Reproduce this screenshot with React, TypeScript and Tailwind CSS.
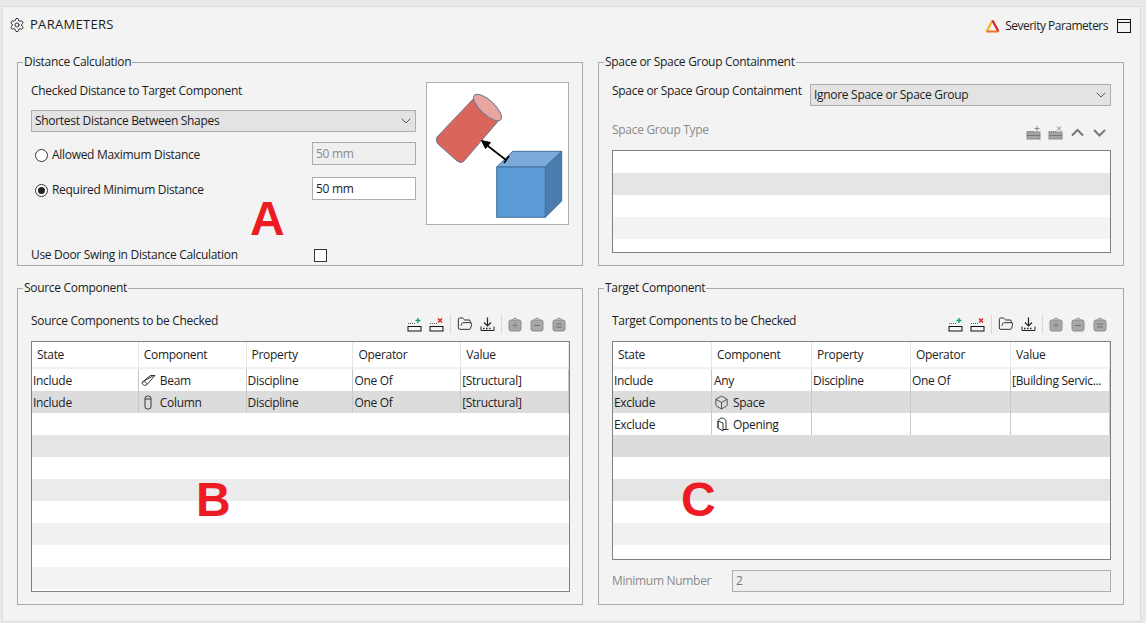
import { ReactNode } from 'react';
import { Settings, ChevronDown, FolderOpen, Box } from 'lucide-react';

type Row = { state: string; component?: string; icon?: ReactNode; property?: string; operator?: string; value?: string };

const RowAdd = ({ mark, color, muted }: { mark: 'plus' | 'x'; color: string; muted?: boolean }) => (
  <svg width="15" height="15" viewBox="0 0 15 15" fill="none">
    <path d="M1 6.5H9" stroke={muted ? '#777' : '#555'} strokeDasharray="1 1" />
    <rect x="1" y={muted ? 7 : 9.5} width="13" height={muted ? 7 : 4.5} fill={muted ? '#a6a6a6' : 'none'} stroke={muted ? '#8a8a8a' : '#111'} />
    {muted && <path d="M1 10.5H14" stroke="#777" />}
    {mark === 'plus' ? <path d="M11 1V6M8.5 3.5H13.5" stroke={color} strokeWidth={muted ? 1 : 1.4} /> : <path d="M9 1.5L13 5.5M13 1.5L9 5.5" stroke={color} strokeWidth={muted ? 1 : 1.4} />}
  </svg>
);

const ImportIcon = () => (
  <svg width="15" height="15" viewBox="0 0 15 15" fill="none" stroke="#222">
    <path d="M7.5 0.5V8.5M4 5.5L7.5 9L11 5.5" strokeWidth="1.2" />
    <path d="M1 9.5V13.5H14V9.5" />
    <path d="M3 11.5H12" strokeDasharray="1.5 1.5" strokeWidth="1.4" />
  </svg>
);

const BagIcon = ({ kind }: { kind: 'plus' | 'minus' | 'equal' }) => (
  <svg width="14" height="15" viewBox="0 0 14 15" fill="none">
    <path d="M4.5 3.5C4.5 0.5 9.5 0.5 9.5 3.5" stroke="#888" />
    <rect x="1" y="3" width="12" height="11" rx="2" fill="#a8a8a8" stroke="#8c8c8c" />
    {kind === 'plus' && <path d="M7 5.5V11.5M4 8.5H10" stroke="#808080" />}
    {kind === 'minus' && <path d="M4 8.5H10" stroke="#707070" />}
    {kind === 'equal' && <path d="M4 7H10M4 10H10" stroke="#707070" />}
  </svg>
);

const Chevron = ({ up }: { up?: boolean }) => (
  <svg width="15" height="15" viewBox="0 0 15 15" fill="none">
    <path d={up ? 'M2 10.5L7.5 5L13 10.5' : 'M2 5L7.5 10.5L13 5'} stroke="#777" strokeWidth="2" />
  </svg>
);

const BeamIcon = () => (
  <svg width="15" height="13" viewBox="0 0 15 13" fill="none" stroke="#333">
    <path d="M1 8.5L9.5 1.5H14L6 10.5C4 12 1.5 11.5 1 8.5Z" />
    <path d="M1 8.5C2.5 6.8 5.5 7.5 6 10.5M3.5 6.5L12 2" />
  </svg>
);

const ColumnIcon = () => (
  <svg width="10" height="15" viewBox="0 0 10 15" fill="none" stroke="#333">
    <rect x="2" y="1" width="6" height="13" rx="2.5" />
    <path d="M2 4H8" />
  </svg>
);

const OpeningIcon = () => (
  <svg width="14" height="15" viewBox="0 0 14 15" fill="none" stroke="#333">
    <path d="M3 11V5C3 -0.2 11 -0.2 11 5V13" />
    <path d="M3 4L8 6V14L3 11Z" />
    <path d="M8 12.5H13.5" />
  </svg>
);

const sourceRows: Row[] = [
  { state: 'Include', component: 'Beam', icon: <BeamIcon />, property: 'Discipline', operator: 'One Of', value: '[Structural]' },
  { state: 'Include', component: 'Column', icon: <ColumnIcon />, property: 'Discipline', operator: 'One Of', value: '[Structural]' },
];

const targetRows: Row[] = [
  { state: 'Include', component: 'Any', property: 'Discipline', operator: 'One Of', value: '[Building Servic...' },
  { state: 'Exclude', component: 'Space', icon: <Box size={17} strokeWidth={1.3} color="#333" /> },
  { state: 'Exclude', component: 'Opening', icon: <OpeningIcon /> },
];

const Toolbar = () => (
  <div className="flex items-center">
    <RowAdd mark="plus" color="#10a36a" />
    <div className="ml-[7px]"><RowAdd mark="x" color="#e02020" /></div>
    <div className="mx-[6px] h-[20px] w-px bg-[#d8d8d8]" />
    <FolderOpen size={16} strokeWidth={1.4} color="#222" />
    <div className="ml-[7px]"><ImportIcon /></div>
    <div className="mx-[6px] h-[20px] w-px bg-[#d8d8d8]" />
    <BagIcon kind="plus" />
    <div className="ml-[8px]"><BagIcon kind="minus" /></div>
    <div className="ml-[8px]"><BagIcon kind="equal" /></div>
  </div>
);

function DataTable({ widths, rows, stripes, tall, letter, letterClass }: { widths: string[]; rows: Row[]; stripes: string[]; tall: string; letter: string; letterClass: string }) {
  const headers = ['State', 'Component', 'Property', 'Operator', 'Value'];
  return (
    <div className={`relative flex flex-col overflow-hidden border border-[#808080] bg-white ${tall}`}>
      <div className="flex h-[27px] shrink-0 border-b-2 border-[#f0f0f0]">
        {headers.map((h, i) => (
          <div key={h} className={`flex items-center border-r border-[#e6e6e6] pt-px pl-[5px] ${widths[i]}`}>{h}</div>
        ))}
      </div>
      {rows.map((r, idx) => (
        <div key={r.state + r.component} className={`flex h-[22px] shrink-0 ${idx % 2 ? 'bg-[#dcdcdc]' : 'bg-white'}`}>
          <div className={`flex items-center border-r border-[#c8c8c8] pt-px pl-[1px] ${widths[0]}`}>{r.state}</div>
          <div className={`flex items-center gap-[4px] border-r border-[#c8c8c8] pt-px pl-[2px] ${widths[1]}`}>
            {r.icon && <span className="flex w-[15px] justify-center">{r.icon}</span>}
            {r.component}
          </div>
          <div className={`flex items-center border-r border-[#c8c8c8] pt-px pl-[1px] ${widths[2]}`}>{r.property}</div>
          <div className={`flex items-center border-r border-[#c8c8c8] pt-px pl-[1px] ${widths[3]}`}>{r.operator}</div>
          <div className={`flex items-center border-r border-[#c8c8c8] pt-px pl-[1px] ${widths[4]}`}>{r.value}</div>
        </div>
      ))}
      {stripes.map((c, i) => (
        <div key={i} className={`h-[22px] shrink-0 ${c}`} />
      ))}
      <div className={`absolute top-[134px] font-['Liberation_Sans',sans-serif] text-[48px] leading-none font-bold text-[#ed1c24] ${letterClass}`}>{letter}</div>
    </div>
  );
}

const GroupBox = ({ title, className, children }: { title: string; className: string; children: ReactNode }) => (
  <fieldset className={`relative border border-[#a9a9a9] pt-[7px] pr-[12px] pl-[13px] ${className}`}>
    <legend className="-ml-[8px] h-[16px] px-px leading-[16px]">{title}</legend>
    {children}
  </fieldset>
);

const Illustration = () => (
  <svg width="141" height="141" viewBox="0 0 141 141" fill="none">
    <path d="M49 13L10 54Q8 58 11 61L30 78Q34 81 37 78L73 36Z" fill="#d9655b" stroke="#6d7a99" strokeWidth="1" />
    <ellipse cx="60.5" cy="24.5" rx="18" ry="7" transform="rotate(43 60.5 24.5)" fill="#e9a6a1" stroke="#6d7a99" />
    <path d="M69.7 84L85.7 68.3H134.7L118.3 84Z" fill="#7dabd9" stroke="#41719c" />
    <path d="M118.3 84L134.7 68.3V118L118.3 134.3Z" fill="#4a7dac" stroke="#41719c" />
    <rect x="69.7" y="84" width="48.6" height="50.3" fill="#5b9bd5" stroke="#41719c" />
    <path d="M59 61.5L79 77" stroke="#000" strokeWidth="1.6" />
    <path d="M54.5 57.5L63.5 59.5L58.5 65.5Z" fill="#000" stroke="#000" />
    <path d="M82 73L77 80" stroke="#000" strokeWidth="1.6" />
  </svg>
);

const RadioRow = ({ label, checked, className }: { label: string; checked?: boolean; className: string }) => (
  <div className={`flex items-center pt-[3px] ${className}`}>
    <span className="ml-[4px] flex h-[13px] w-[13px] items-center justify-center rounded-full border border-[#333] bg-white">
      {checked && <span className="h-[7px] w-[7px] rounded-full bg-[#222]" />}
    </span>
    <span className="ml-[4px] w-[260px]">{label}</span>
  </div>
);

export default function App() {
  return (
    <div className="h-[623px] w-[1146px] overflow-hidden bg-[#e9e9e9] pt-[6px] pl-[2px] font-['Open_Sans',sans-serif] text-[12px] tracking-[-0.3px] text-[#1c1c1c]">
      <div className="h-[616px] w-[1139px] border border-[#dcdcdc] bg-[#f3f3f3]">
        {/* Header */}
        <div className="flex h-[47px] items-start justify-between pt-[8px] pr-[9px] pl-[6px]">
          <div className="flex items-center gap-[5px]">
            <Settings size={16} strokeWidth={1.4} color="#222" />
            <span className="text-[13px] tracking-[0.3px]">PARAMETERS</span>
          </div>
          <div className="flex items-center pt-[2px]">
            <svg width="15" height="14" viewBox="0 0 15 14" fill="none">
              <path d="M1.5 12.5L7.5 1.5" stroke="#f2b51c" strokeWidth="2.2" />
              <path d="M7.5 1.5L13.5 12.5" stroke="#d1261c" strokeWidth="2.2" />
              <path d="M1.5 12.5H13.5" stroke="#e8742a" strokeWidth="2" />
            </svg>
            <span className="ml-[5px] tracking-[-0.5px]">Severity Parameters</span>
            <svg className="ml-[9px]" width="14" height="14" viewBox="0 0 14 14" fill="none" stroke="#111">
              <rect x="0.5" y="0.5" width="13" height="13" />
              <path d="M0.5 3.5H13.5" />
            </svg>
          </div>
        </div>

        <div className="grid grid-cols-[566px_525px] gap-x-[15px] gap-y-[14px] pl-[14px]">
          {/* Distance Calculation */}
          <GroupBox title="Distance Calculation" className="h-[212px]">
            <div className="flex">
              <div className="w-[385px]">
                <div className="mt-[6px] leading-[16px]">Checked Distance to Target Component</div>
                <div className="mt-[11px] flex h-[22px] items-center justify-between border border-[#adadad] bg-[#e3e3e3] pr-[1px] pl-[3px]">
                  Shortest Distance Between Shapes
                  <ChevronDown size={16} strokeWidth={1.3} color="#444" />
                </div>
                <div className="mt-[10px] flex h-[23px] items-center">
                  <RadioRow label="Allowed Maximum Distance" className="w-[281px]" />
                  <div className="flex h-[23px] w-[104px] items-center border border-[#adadad] bg-[#efefef] pl-[3px] text-[#8a8a8a]">50 mm</div>
                </div>
                <div className="mt-[12px] flex h-[23px] items-center">
                  <RadioRow label="Required Minimum Distance" checked className="w-[281px]" />
                  <div className="flex h-[23px] w-[104px] items-center border border-[#adadad] bg-white pl-[3px]">50 mm</div>
                </div>
              </div>
              <div className="mt-[5px] ml-[10px] h-[143px] w-[143px] border border-[#adadad] bg-white">
                <Illustration />
              </div>
            </div>
            <div className="mt-[22px] flex items-center leading-[16px]">
              <span className="w-[283px]">Use Door Swing in Distance Calculation</span>
              <span className="h-[13px] w-[13px] border border-[#333] bg-white" />
            </div>
            <div className="absolute top-[125px] left-[232px] font-['Liberation_Sans',sans-serif] text-[48px] leading-none font-bold text-[#ed1c24]">A</div>
          </GroupBox>

          {/* Space or Space Group Containment */}
          <GroupBox title="Space or Space Group Containment" className="h-[212px]">
            <div className="flex items-start">
              <div className="mt-[6px] w-[198px] leading-[16px]">Space or Space Group Containment</div>
              <div className="mt-[7px] flex h-[22px] w-[301px] items-center justify-between border border-[#adadad] bg-[#e3e3e3] pr-[1px] pl-[3px]">
                Ignore Space or Space Group
                <ChevronDown size={16} strokeWidth={1.3} color="#444" />
              </div>
            </div>
            <div className="mt-[12px] flex h-[32px] items-start justify-between pr-[4px]">
              <span className="mt-[3px] text-[#8a8a8a]">Space Group Type</span>
              <div className="mt-[7px] flex items-center gap-[7px]">
                <RowAdd mark="plus" color="#888" muted />
                <RowAdd mark="x" color="#888" muted />
                <Chevron up />
                <Chevron />
              </div>
            </div>
            <div className="flex h-[103px] flex-col overflow-hidden border border-[#808080] bg-white">
              <div className="h-[22px] shrink-0 bg-white" />
              <div className="h-[22px] shrink-0 bg-[#e5e5e5]" />
              <div className="h-[22px] shrink-0 bg-white" />
              <div className="h-[22px] shrink-0 bg-[#f3f3f3]" />
            </div>
          </GroupBox>

          {/* Source Component */}
          <GroupBox title="Source Component" className="h-[325px]">
            <div className="flex h-[38px] items-start justify-between pr-[4px]">
              <span className="mt-[10px] leading-[16px]">Source Components to be Checked</span>
              <div className="mt-[11px]"><Toolbar /></div>
            </div>
            <DataTable
              widths={['w-[107px]', 'w-[108px]', 'w-[107px]', 'w-[108px]', 'w-[108px]']}
              rows={sourceRows}
              stripes={['bg-white', 'bg-[#e5e5e5]', 'bg-white', 'bg-[#ececec]', 'bg-white', 'bg-[#f1f1f1]', 'bg-white', 'bg-[#f3f3f3]']}
              tall="h-[251px] w-[539px]"
              letter="B"
              letterClass="left-[164px]"
            />
          </GroupBox>

          {/* Target Component */}
          <GroupBox title="Target Component" className="h-[325px]">
            <div className="flex h-[38px] items-start justify-between pr-[4px]">
              <span className="mt-[10px] leading-[16px]">Target Components to be Checked</span>
              <div className="mt-[11px]"><Toolbar /></div>
            </div>
            <DataTable
              widths={['w-[99px]', 'w-[100px]', 'w-[99px]', 'w-[100px]', 'w-[99px]']}
              rows={targetRows}
              stripes={['bg-[#dcdcdc]', 'bg-white', 'bg-[#e5e5e5]', 'bg-white', 'bg-[#f1f1f1]', 'bg-white']}
              tall="h-[219px] w-[499px]"
              letter="C"
              letterClass="left-[68px]"
            />
            <div className="mt-[10px] flex h-[22px] items-center">
              <span className="w-[120px] text-[#8a8a8a]">Minimum Number</span>
              <div className="flex h-[22px] w-[379px] items-center border border-[#adadad] bg-[#efefef] pl-[3px] text-[#777]">2</div>
            </div>
          </GroupBox>
        </div>
      </div>
    </div>
  );
}
